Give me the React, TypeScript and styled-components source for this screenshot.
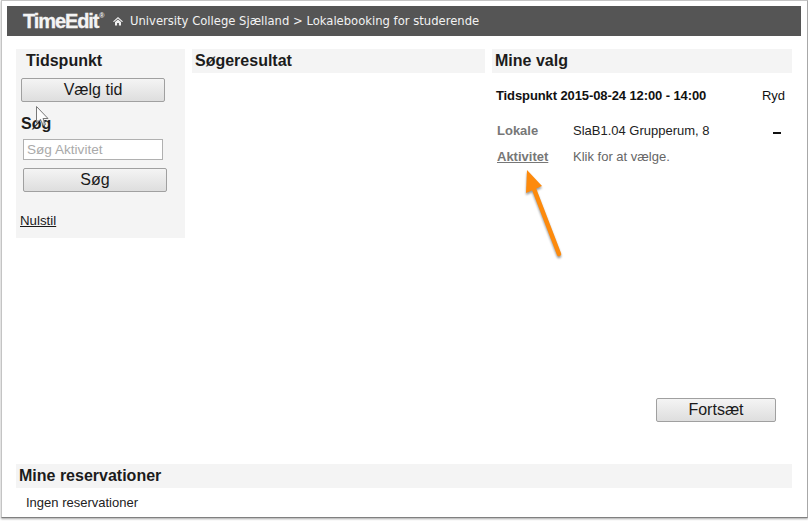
import React from 'react';
import styled, { createGlobalStyle } from 'styled-components';

const GlobalStyle = createGlobalStyle`
    html, body {
        margin: 0;
        padding: 0;
        background: #ffffff;
        font-family: "Liberation Sans", Arial, sans-serif;
        color: #111111;
    }
`;

const Page = styled.div`
    position: relative;
    width: 808px;
    height: 521px;
    overflow: hidden;
    background: #ffffff;
`;

const Frame = styled.div`
    box-sizing: border-box;
    width: 807px;
    height: 518px;
    margin-left: 1px;
    padding: 5px 6px 0 5px;
    border: 1px solid #c4c4c4;
    border-right: 1px solid #a8a8a8;
    border-bottom: 1px solid #808080;
    box-shadow: 0 1px 2px rgba(0, 0, 0, 0.35);
    display: flex;
    flex-direction: column;
`;

const Header = styled.header`
    height: 30px;
    background: #555555;
    color: #ffffff;
    display: flex;
    align-items: center;
    padding-left: 16px;
    flex: none;
`;

const Logo = styled.div`
    display: flex;
    align-items: flex-start;
    font-size: 20px;
    font-weight: 700;
    letter-spacing: -1.1px;
    width: 90px;
    line-height: 20px;
    color: #f4f4f4;
    -webkit-text-stroke: 0.3px #f4f4f4;
    sup {
        font-size: 7px;
        line-height: 8px;
        margin: 1px 0 0 1px;
        letter-spacing: 0;
        -webkit-text-stroke: 0;
    }
`;

const Crumbs = styled.div`
    display: flex;
    align-items: center;
    gap: 7px;
    font-family: "DejaVu Sans", Verdana, sans-serif;
    font-size: 11.6px;
    color: #f2f2f2;
`;

const Columns = styled.div`
    display: grid;
    grid-template-columns: 169px 293px 300px;
    column-gap: 7px;
    margin: 13px 0 0 9px;
    flex: none;
`;

const Sidebar = styled.aside`
    height: 189px;
    background: #f4f4f4;
    display: flex;
    flex-direction: column;
`;

const SidebarTitle = styled.h2`
    margin: 0 0 5px;
    padding-left: 10px;
    font-size: 16px;
    line-height: 24px;
    font-weight: 700;
    color: #1c1c1c;
`;

const Button = styled.button<{ $width: number; $left?: number }>`
    box-sizing: border-box;
    display: block;
    flex: none;
    width: ${(p) => p.$width}px;
    height: 24px;
    margin-left: ${(p) => p.$left ?? 0}px;
    padding: 0;
    border: 1px solid #a0a0a0;
    border-radius: 2px;
    background: linear-gradient(#f4f4f4, #dedede);
    font-family: "Liberation Sans", Arial, sans-serif;
    font-size: 16px;
    color: #1a1a1a;
`;

const SearchLabel = styled.h3`
    margin: 13px 0 6px 5px;
    font-size: 16px;
    line-height: 18px;
    font-weight: 700;
    color: #1c1c1c;
`;

const SearchInput = styled.input`
    box-sizing: border-box;
    display: block;
    width: 140px;
    height: 21px;
    margin: 0 0 8px 7px;
    padding: 0 3px;
    border: 1px solid #b0b0b0;
    background: #ffffff;
    font-family: "Liberation Sans", Arial, sans-serif;
    font-size: 13.6px;
    &::placeholder {
        color: #aaaaaa;
        opacity: 1;
    }
`;

const ResetLink = styled.a`
    margin: 21px 0 0 4px;
    font-size: 13.3px;
    line-height: 16px;
    color: #1a1a1a;
    text-decoration: underline;
`;

const SectionTitle = styled.h2`
    margin: 0;
    height: 24px;
    padding-left: 3px;
    background: #f4f4f4;
    font-size: 16px;
    line-height: 24px;
    font-weight: 700;
    color: #1c1c1c;
`;

const Selection = styled.section`
    display: flex;
    flex-direction: column;
`;

const SummaryRow = styled.div`
    display: flex;
    justify-content: space-between;
    margin: 15px 0 0 4px;
    padding-right: 7px;
    font-size: 13px;
    line-height: 16px;
`;

const SummaryText = styled.strong`
    color: #111111;
    letter-spacing: -0.1px;
`;

const ChoiceRow = styled.div<{ $first?: boolean }>`
    display: grid;
    grid-template-columns: 76px 1fr 19px;
    margin: ${(p) => (p.$first ? '19px' : '10px')} 0 0 5px;
    font-size: 13px;
    line-height: 16px;
    color: #222222;
`;

const ChoiceLabel = styled.span`
    font-weight: 700;
    color: #777777;
`;

const ChoiceLink = styled.a`
    font-weight: 700;
    color: #777777;
    text-decoration: underline;
`;

const ChoiceHint = styled.span`
    color: #666666;
`;

const RemoveMark = styled.span`
    align-self: center;
    width: 8px;
    height: 2px;
    margin-top: 4px;
    background: #111111;
`;

const Continue = styled.div`
    display: flex;
    justify-content: flex-end;
    padding-right: 16px;
    margin-top: 233px;
`;

const Reservations = styled.section`
    margin: 42px 0 0 9px;
    width: 776px;
`;

const ReservationsNote = styled.p`
    margin: 7px 0 0 10px;
    font-size: 13px;
    line-height: 16px;
    color: #222222;
`;

const Pointer = styled.svg`
    position: absolute;
    left: 34px;
    top: 105px;
`;

const Arrow = styled.svg`
    position: absolute;
    left: 520px;
    top: 168px;
`;

const App: React.FC = () => (
    <Page>
        <GlobalStyle />
        <Frame>
            <Header>
                <Logo>
                    TimeEdit<sup>®</sup>
                </Logo>
                <Crumbs>
                    <svg width="10" height="10" viewBox="0 0 10 10" fill="#f2f2f2">
                        <path d="M5 1 L0 5.4 L1 5.9 L5 2.5 L9 5.9 L10 5.4 Z" />
                        <path d="M2 6 L5 3.4 L8 6 V9.4 H5.9 V7 H4.1 V9.4 H2 Z" />
                    </svg>
                    <span>University College Sjælland &gt; Lokalebooking for studerende</span>
                </Crumbs>
            </Header>
            <Columns>
                <Sidebar>
                    <SidebarTitle>Tidspunkt</SidebarTitle>
                    <Button $width={144} $left={5}>Vælg tid</Button>
                    <SearchLabel>Søg</SearchLabel>
                    <SearchInput placeholder="Søg Aktivitet" readOnly />
                    <Button $width={144} $left={7}>Søg</Button>
                    <ResetLink href="#">Nulstil</ResetLink>
                </Sidebar>
                <section>
                    <SectionTitle>Søgeresultat</SectionTitle>
                </section>
                <Selection>
                    <SectionTitle>Mine valg</SectionTitle>
                    <SummaryRow>
                        <SummaryText>Tidspunkt 2015-08-24 12:00 - 14:00</SummaryText>
                        <span>Ryd</span>
                    </SummaryRow>
                    <ChoiceRow $first>
                        <ChoiceLabel>Lokale</ChoiceLabel>
                        <span>SlaB1.04 Grupperum, 8</span>
                        <RemoveMark />
                    </ChoiceRow>
                    <ChoiceRow>
                        <ChoiceLink href="#">Aktivitet</ChoiceLink>
                        <ChoiceHint>Klik for at vælge.</ChoiceHint>
                    </ChoiceRow>
                    <Continue>
                        <Button $width={120}>Fortsæt</Button>
                    </Continue>
                </Selection>
            </Columns>
            <Reservations>
                <SectionTitle>Mine reservationer</SectionTitle>
                <ReservationsNote>Ingen reservationer</ReservationsNote>
            </Reservations>
        </Frame>
        <Pointer width="16" height="24" viewBox="0 0 16 24">
            <path d="M2.5 1.5 V18 L6.5 14.5 L9 20.5 L11.5 19.5 L9 13.5 L14 13.5 Z" fill="#ffffff" fillOpacity="0.7" stroke="#777777" strokeWidth="1" />
        </Pointer>
        <Arrow width="50" height="95" viewBox="0 0 50 95">
            <g style={{ filter: 'drop-shadow(0 2px 1px rgba(0, 0, 0, 0.4))' }}>
                <path d="M39 86 L14 21" stroke="#fd8a0c" strokeWidth="4.5" strokeLinecap="round" fill="none" />
                <path d="M7 2 L22 18 L6 25 Z" fill="#fd8a0c" />
            </g>
        </Arrow>
    </Page>
);

export default App;
